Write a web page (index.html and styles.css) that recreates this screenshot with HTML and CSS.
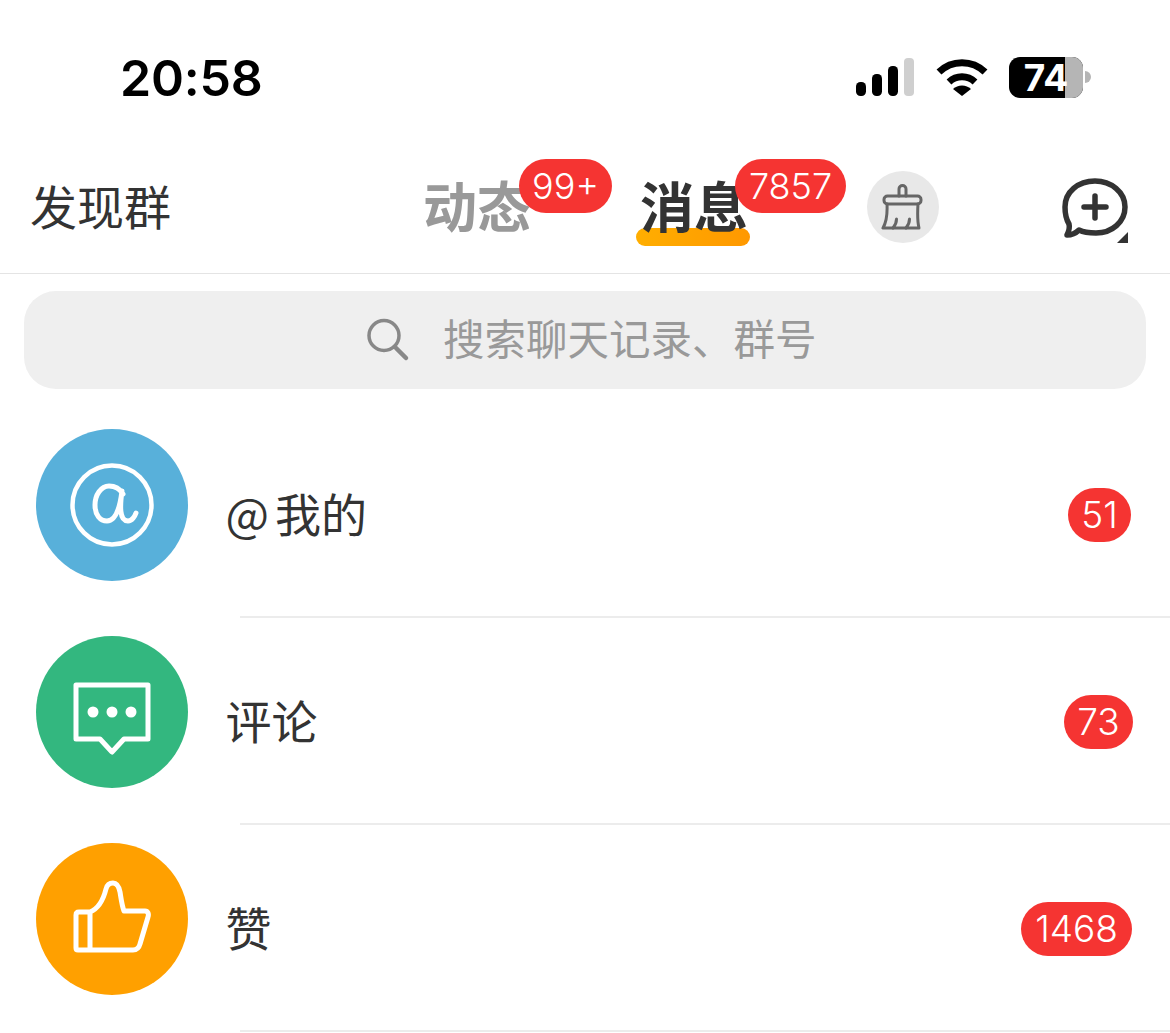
FILE: index.html
```html
<!DOCTYPE html>
<html lang="zh-CN">
<head>
<meta charset="utf-8">
<title>消息</title>
<link rel="stylesheet" href="styles.css">
</head>
<body>
<div class="status">
  <span class="clock">20:58</span>
  <div class="status-icons">
    <svg class="signal" width="58" height="38" viewBox="0 0 58 38"><rect x="0" y="24" width="10" height="14" rx="4.5"/><rect x="16" y="16" width="10" height="22" rx="4.5"/><rect x="32" y="8" width="10" height="30" rx="4.5"/><rect x="48" y="0" width="10" height="38" rx="4" fill="#cfcfcf"/></svg>
    <svg class="wifi" width="52" height="38" viewBox="0 0 52 38"><path d="M3 14 A33 33 0 0 1 49 14" fill="none" stroke="#000" stroke-width="7"/><path d="M13 24 A19 19 0 0 1 39 24" fill="none" stroke="#000" stroke-width="7"/><path d="M17 31 A13 13 0 0 1 35 31 L26 38 Z" fill="#000"/></svg>
    <div class="battery"><div class="battery-body"><div class="battery-fill"></div><span class="battery-num">74</span></div><div class="battery-tip"></div></div>
  </div>
</div>
<header class="nav">
  <span class="discover">发现群</span>
  <div class="tabs">
    <div class="tab tab-muted">动态<span class="badge badge-a">99+</span></div>
    <div class="tab tab-on">消息<span class="under"></span><span class="badge badge-b">7857</span></div>
    <div class="broom">
      <svg width="44" height="46" viewBox="0 0 44 46" fill="none" stroke="#666" stroke-width="3" stroke-linejoin="round" stroke-linecap="round"><path d="M18 12V5a3.5 3.500 0 0 1 7 0V12"/><rect x="3" y="12" width="37" height="8" rx="3.5"/><path d="M6 20C6.500 30 5.500 38 2 44H38C36.500 38 36.500 28 37 20"/><path d="M12 44C14.500 41 15.500 38 15.500 35M25 44C27.500 41 28.500 38 28.500 35"/></svg>
    </div>
  </div>
  <svg class="add" width="68" height="66" viewBox="0 0 68 66" fill="none" stroke="#333" stroke-width="5.500" stroke-linecap="round" stroke-linejoin="round"><path d="M33 4C49 4 63 15 63 30C63 45 50 56 34 56C27 56 21 55 17 53C13 57 8 58 5 58C7 54 8 51 7 47C4 42 3 37 3 30C3 15 16 4 33 4Z"/><path d="M22 30H44M33 19V41"/><path d="M55 66L66 55V66Z" fill="#333" stroke="none"/></svg>
</header>
<div class="search">
  <svg width="44" height="44" viewBox="0 0 44 44" fill="none" stroke="#888" stroke-linecap="round"><circle cx="17" cy="17.500" r="15" stroke-width="3.500"/><path d="M29 30L39 40" stroke-width="4.500"/></svg>
  <span class="search-text">搜索聊天记录、群号</span>
</div>
<main class="list">
  <div class="row">
    <div class="avatar a-blue">
      <svg width="84" height="84" viewBox="0 0 84 84" fill="none" stroke="#fff" stroke-linecap="round"><circle cx="42" cy="42" r="39.500" stroke-width="4.500"/><path d="M53 31C50 26 45 23 39 23C31 23 25 32 25 42C25 52 30 58 37 58C46 58 50 44 52 28C50 42 49 58 58 58C62 58 65 53 66 50" stroke-width="5" stroke-linejoin="round"/></svg>
    </div>
    <span class="label"><span class="at">@</span>我的</span>
    <span class="count c-51">51</span>
  </div>
  <div class="row">
    <div class="avatar a-green">
      <svg class="bubble" width="78" height="74" viewBox="0 0 78 74" fill="none" stroke="#fff" stroke-width="5" stroke-linejoin="round"><path d="M3 3H75V57H51L39 70L27 57H3Z"/><circle cx="20" cy="30" r="5.500" fill="#fff" stroke="none"/><circle cx="39" cy="30" r="5.500" fill="#fff" stroke="none"/><circle cx="58" cy="30" r="5.500" fill="#fff" stroke="none"/></svg>
    </div>
    <span class="label">评论</span>
    <span class="count c-73">73</span>
  </div>
  <div class="row">
    <div class="avatar a-orange">
      <svg class="thumb" width="78" height="74" viewBox="0 0 78 74" fill="none" stroke="#fff" stroke-width="5" stroke-linejoin="round" stroke-linecap="round"><path d="M17 70H5C3.500 70 3 69 3 68V35C3 33 4 32 6 32H17ZM17 70V32C27 28 31 17 33 9C34 5 37 3 40 3C44 3 46 7 47 12C48 18 49 26 51 31H72C75 31 76 34 75 37L67 64C66 68 64 70 60 70Z"/></svg>
    </div>
    <span class="label">赞</span>
    <span class="count c-1468">1468</span>
  </div>
</main>
</body>
</html>
```
FILE: styles.css
```css
* { box-sizing: border-box; }
html, body { margin: 0; padding: 0; }
body {
  width: 1170px;
  height: 1033px;
  overflow: hidden;
  background: #fff;
  font-family: "Noto Sans CJK SC", "Liberation Sans", sans-serif;
  color: #333;
}
.status {
  height: 146px;
  display: flex;
  align-items: flex-start;
  justify-content: space-between;
  padding: 48px 79px 0 120px;
}
.clock {
  font-family: Inter, "Liberation Sans", sans-serif;
  font-weight: 600;
  font-size: 50px;
  line-height: 60px;
  letter-spacing: -0.2px;
  color: #000;
}
.status-icons {
  display: flex;
  align-items: center;
  height: 38px;
  margin-top: 10px;
}
.wifi { margin-left: 22px; }
.battery { display: flex; align-items: center; margin-left: 21px; }
.battery-body {
  position: relative;
  width: 74px;
  height: 41px;
  background: #000;
  border-radius: 11px;
  display: flex;
  align-items: center;
  justify-content: center;
}
.battery-fill {
  position: absolute;
  right: 0;
  top: 0;
  bottom: 0;
  width: 18px;
  background: #b5b5b5;
  border-radius: 0 11px 11px 0;
}
.battery-num {
  position: relative;
  font-family: Inter, "Liberation Sans", sans-serif;
  font-weight: 700;
  font-size: 37px;
  color: #fff;
  line-height: 41px;
}
.battery-tip {
  width: 6px;
  height: 12px;
  margin-left: 2px;
  background: #b5b5b5;
  border-radius: 0 6px 6px 0;
}
.nav {
  height: 128px;
  border-bottom: 1px solid #e4e4e4;
  display: flex;
  align-items: flex-start;
  position: relative;
  padding-left: 30px;
}
.discover {
  font-size: 47px;
  line-height: 60px;
  margin-top: 29px;
  width: 393px;
  flex: none;
}
.tabs { display: flex; align-items: flex-start; flex: none; }
.tab {
  position: relative;
  font-size: 54px;
  line-height: 66px;
  font-weight: 700;
  margin-top: 26px;
  white-space: nowrap;
}
.tab-muted { color: #999; width: 217px; }
.tab-on { color: #333; width: 227px; }
.under {
  position: absolute;
  left: -4px;
  top: 56px;
  width: 114px;
  height: 18px;
  border-radius: 9px;
  background: linear-gradient(90deg, #ffae00, #ff9800);
  z-index: -1;
}
.badge {
  position: absolute;
  top: -13px;
  height: 54px;
  border-radius: 27px;
  background: #f53432;
  color: #fff;
  font-family: Inter, "Liberation Sans", sans-serif;
  font-weight: 350;
  font-size: 36px;
  line-height: 54px;
  text-align: center;
}
.badge-a { left: 96px; width: 93px; }
.badge-b { left: 95px; width: 111px; }
.broom {
  width: 72px;
  height: 72px;
  margin-top: 25px;
  border-radius: 50%;
  background: #e8e8e8;
  display: flex;
  align-items: center;
  justify-content: center;
  flex: none;
}
.add { flex: none; margin-left: 123px; margin-top: 31px; }
.search {
  margin: 17px 24px 0;
  height: 98px;
  border-radius: 32px;
  background: #efefef;
  display: flex;
  align-items: center;
  padding-left: 343px;
  gap: 32px;
}
.search-text {
  font-size: 41.500px;
  line-height: 60px;
  margin-bottom: 6px;
  color: #999;
  white-space: nowrap;
}
.list { margin-top: 22px; }
.row {
  height: 207px;
  display: flex;
  align-items: flex-start;
  padding: 18px 37px 0 36px;
  position: relative;
}
.row::after {
  content: "";
  position: absolute;
  left: 240px;
  right: 0;
  bottom: 0;
  height: 2px;
  background: #ececec;
}
.avatar {
  width: 152px;
  height: 152px;
  border-radius: 50%;
  display: flex;
  align-items: center;
  justify-content: center;
  flex: none;
}
.a-blue { background: #58b0da; }
.a-green { background: #33b77f; }
.a-orange { background: #ffa000; }
.bubble { margin-top: 14px; }
.thumb { margin-bottom: 4px; }
.label {
  font-size: 46px;
  line-height: 60px;
  margin-left: 37.500px;
  margin-top: 53px;
  flex: 1;
}
.at { margin-right: 6px; }
.count {
  height: 54px;
  border-radius: 27px;
  background: #f53432;
  color: #fff;
  font-family: Inter, "Liberation Sans", sans-serif;
  font-weight: 350;
  font-size: 37px;
  line-height: 54px;
  text-align: center;
  margin-top: 59px;
  flex: none;
}
.c-51 { width: 63px; margin-right: 2px; }
.c-73 { width: 69px; }
.c-1468 { width: 111px; margin-right: 1px; }
```
